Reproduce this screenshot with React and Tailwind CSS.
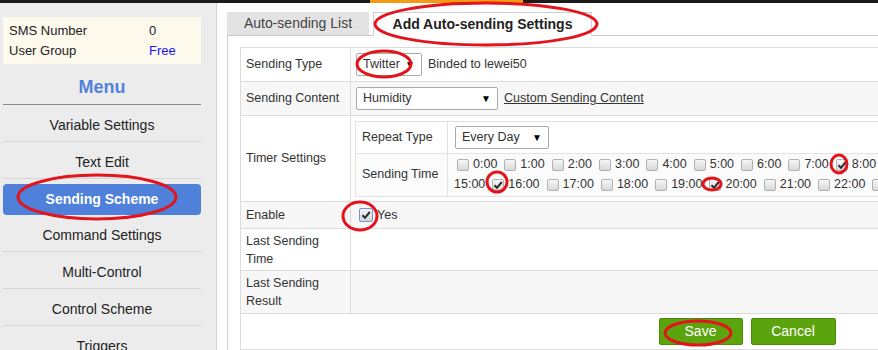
const menu = ['Variable Settings', 'Text Edit', 'Sending Scheme', 'Command Settings', 'Multi-Control', 'Control Scheme', 'Triggers']

const checkedHours = [8, 16, 20]

function Box({ checked, focus }) {
  return (
    <span
      className={`inline-flex h-[12px] w-[12px] shrink-0 items-center justify-center rounded-[2px] border bg-gradient-to-b from-[#f6f6f6] to-[#d9d9d9] ${
        focus ? 'border-[#6d98d8]' : 'border-[#b1b1b1]'
      }`}
    >
      {checked && (
        <svg width="10" height="10" viewBox="0 0 10 10">
          <path d="M1.5 5.2 L4 7.8 L8.8 2" fill="none" stroke="#2b2b2b" strokeWidth="2" />
        </svg>
      )}
    </span>
  )
}

function Select({ value, width }) {
  return (
    <span
      className={`inline-flex h-[23px] items-center justify-between rounded-[2px] border border-[#a9a9a9] bg-white pl-[6px] pr-[6px] ${width}`}
    >
      <span>{value}</span>
      <span className="text-[10px] text-black">▼</span>
    </span>
  )
}

function Hour({ h }) {
  return (
    <span className="flex items-center">
      <Box checked={checkedHours.includes(h)} />
      <span className="ml-[4px]">{h}:00</span>
    </span>
  )
}

function Sidebar() {
  return (
    <aside className="h-[347px] w-[217px] shrink-0 border-r border-[#d2d2d2] bg-[#ececec] pl-[3px] pr-[15px] pt-[14px]">
      <div className="h-[47px] bg-[#fdf9ec] px-[6px] pt-[4px] text-[13px] text-[#222]">
        <div className="flex h-[20px] items-center">
          <span className="w-[140px]">SMS Number</span>
          <span>0</span>
        </div>
        <div className="flex h-[20px] items-center">
          <span className="w-[140px]">User Group</span>
          <span className="text-[#1616ff]">Free</span>
        </div>
      </div>
      <div className="flex h-[41px] items-center justify-center border-b border-[#8a8a8a] pt-[6px] text-[18px] font-bold text-[#5282da]">
        Menu
      </div>
      <ul>
        {menu.map((m) =>
          m === 'Sending Scheme' ? (
            <li key={m} className="h-[36px] pt-[5px]">
              <div className="flex h-[31px] items-center justify-center rounded-[4px] bg-[#4f80da] text-[14px] font-bold text-white">
                {m}
              </div>
            </li>
          ) : (
            <li
              key={m}
              className="flex h-[37px] items-center justify-center border-b border-[#d6d6d6] pt-[5px] text-[14px] text-[#222]"
            >
              {m}
            </li>
          )
        )}
      </ul>
    </aside>
  )
}

function Content() {
  const cell = 'border border-[#dcdcdc]'
  return (
    <div className="ml-[10px] min-w-0 flex-1 pt-[9px]">
      <div className="flex w-[1030px] items-end border-b border-[#c9c9c9]">
        <div className="flex h-[23px] w-[142px] items-center justify-center bg-[#e3e3e3] text-[14px] text-[#444]">
          Auto-sending List
        </div>
        <div className="-mb-px ml-[4px] flex h-[24px] w-[219px] items-center justify-center border border-[#cfcfcf] border-b-white bg-white text-[14px] font-bold text-[#222]">
          Add Auto-sending Settings
        </div>
      </div>
      <div className="w-[1030px] border-l border-[#cfcfcf] pl-[12px] pt-[11px]">
        <table className="w-[1014px] border-collapse text-[12.5px]">
          <tbody>
            <tr className="h-[34px]">
              <td className={`w-[110px] px-[5px] ${cell}`}>Sending Type</td>
              <td className={`px-[5px] ${cell}`}>
                <div className="flex items-center">
                  <Select value="Twitter" width="w-[66px]" />
                  <span className="ml-[6px]">Binded to lewei50</span>
                </div>
              </td>
            </tr>
            <tr className="h-[34px] bg-[#f7f7f7]">
              <td className={`px-[5px] ${cell}`}>Sending Content</td>
              <td className={`px-[5px] ${cell}`}>
                <div className="flex items-center">
                  <Select value="Humidity" width="w-[142px]" />
                  <span className="ml-[6px] underline">Custom Sending Content</span>
                </div>
              </td>
            </tr>
            <tr className="h-[86px]">
              <td className={`px-[5px] ${cell}`}>Timer Settings</td>
              <td className={`p-[4px] ${cell}`}>
                <table className="w-full border-collapse">
                  <tbody>
                    <tr className="h-[32px]">
                      <td className="w-[92px] whitespace-nowrap border border-[#e2e2e2] px-[6px]">Repeat Type</td>
                      <td className="border border-[#e2e2e2] px-[7px]">
                        <Select value="Every Day" width="w-[94px]" />
                      </td>
                    </tr>
                    <tr className="h-[43px] bg-[#fbfbfb]">
                      <td className="whitespace-nowrap border border-[#e2e2e2] px-[6px]">Sending Time</td>
                      <td className="border border-[#e2e2e2] pl-[6px]">
                        <div className="flex h-[20px] items-center gap-[7px] whitespace-nowrap pl-[3px]">
                          {Array.from({ length: 15 }, (_, h) => (
                            <Hour key={h} h={h} />
                          ))}
                          <Box />
                        </div>
                        <div className="flex h-[20px] items-center gap-[7px] whitespace-nowrap">
                          <span>15:00</span>
                          {Array.from({ length: 8 }, (_, i) => (
                            <Hour key={i} h={i + 16} />
                          ))}
                        </div>
                      </td>
                    </tr>
                  </tbody>
                </table>
              </td>
            </tr>
            <tr className="h-[27px] bg-[#f7f7f7]">
              <td className={`px-[5px] ${cell}`}>Enable</td>
              <td className={`px-[8px] ${cell}`}>
                <div className="flex items-center">
                  <span className="flex h-[14px] w-[14px] items-center justify-center rounded-[2px] border border-[#6d98d8] bg-gradient-to-b from-[#f4f4f4] to-[#d6d6d6]">
                    <svg width="10" height="10" viewBox="0 0 10 10">
                      <path d="M1.5 5.2 L4 7.8 L8.8 2" fill="none" stroke="#2b2b2b" strokeWidth="2" />
                    </svg>
                  </span>
                  <span className="ml-[4px]">Yes</span>
                </div>
              </td>
            </tr>
            <tr className="h-[42px]">
              <td className={`px-[5px] leading-[18px] ${cell}`}>
                Last Sending
                <br />
                Time
              </td>
              <td className={cell} />
            </tr>
            <tr className="h-[43px] bg-[#f7f7f7]">
              <td className={`px-[5px] leading-[18px] ${cell}`}>
                Last Sending
                <br />
                Result
              </td>
              <td className={cell} />
            </tr>
            <tr className="h-[36px]">
              <td colSpan={2} className={cell}>
                <div className="flex justify-center gap-[8px]">
                  <button className="h-[27px] w-[84px] rounded-[2px] border border-[#4b8b07] bg-[#5ca40d] text-[14px] text-white">
                    Save
                  </button>
                  <button className="h-[27px] w-[85px] rounded-[2px] border border-[#4b8b07] bg-[#5ca40d] text-[14px] text-white">
                    Cancel
                  </button>
                </div>
              </td>
            </tr>
          </tbody>
        </table>
      </div>
    </div>
  )
}

function Marks() {
  const rings = [
    [486, 24, 111, 21],
    [384, 64, 27, 13],
    [97, 197, 79, 22],
    [839, 164, 8, 9],
    [497, 182, 10, 10],
    [712, 184, 9, 6],
    [360, 216, 17, 14],
    [698, 333, 33, 12],
  ]
  return (
    <svg className="pointer-events-none absolute left-0 top-0" width="878" height="350">
      {rings.map(([cx, cy, rx, ry], i) => (
        <ellipse key={i} cx={cx} cy={cy} rx={rx} ry={ry} fill="none" stroke="#e3141c" strokeWidth="3" />
      ))}
    </svg>
  )
}

export default function App() {
  return (
    <div className="relative h-[350px] w-[878px] overflow-hidden bg-white font-['Liberation_Sans',Arial,sans-serif] text-[#333]">
      <div className="flex h-[3px] bg-[#1b1b1b]">
        <div className="ml-[370px] w-[153px] bg-[#f59a13]" />
      </div>
      <div className="flex">
        <Sidebar />
        <Content />
      </div>
      <Marks />
    </div>
  )
}
